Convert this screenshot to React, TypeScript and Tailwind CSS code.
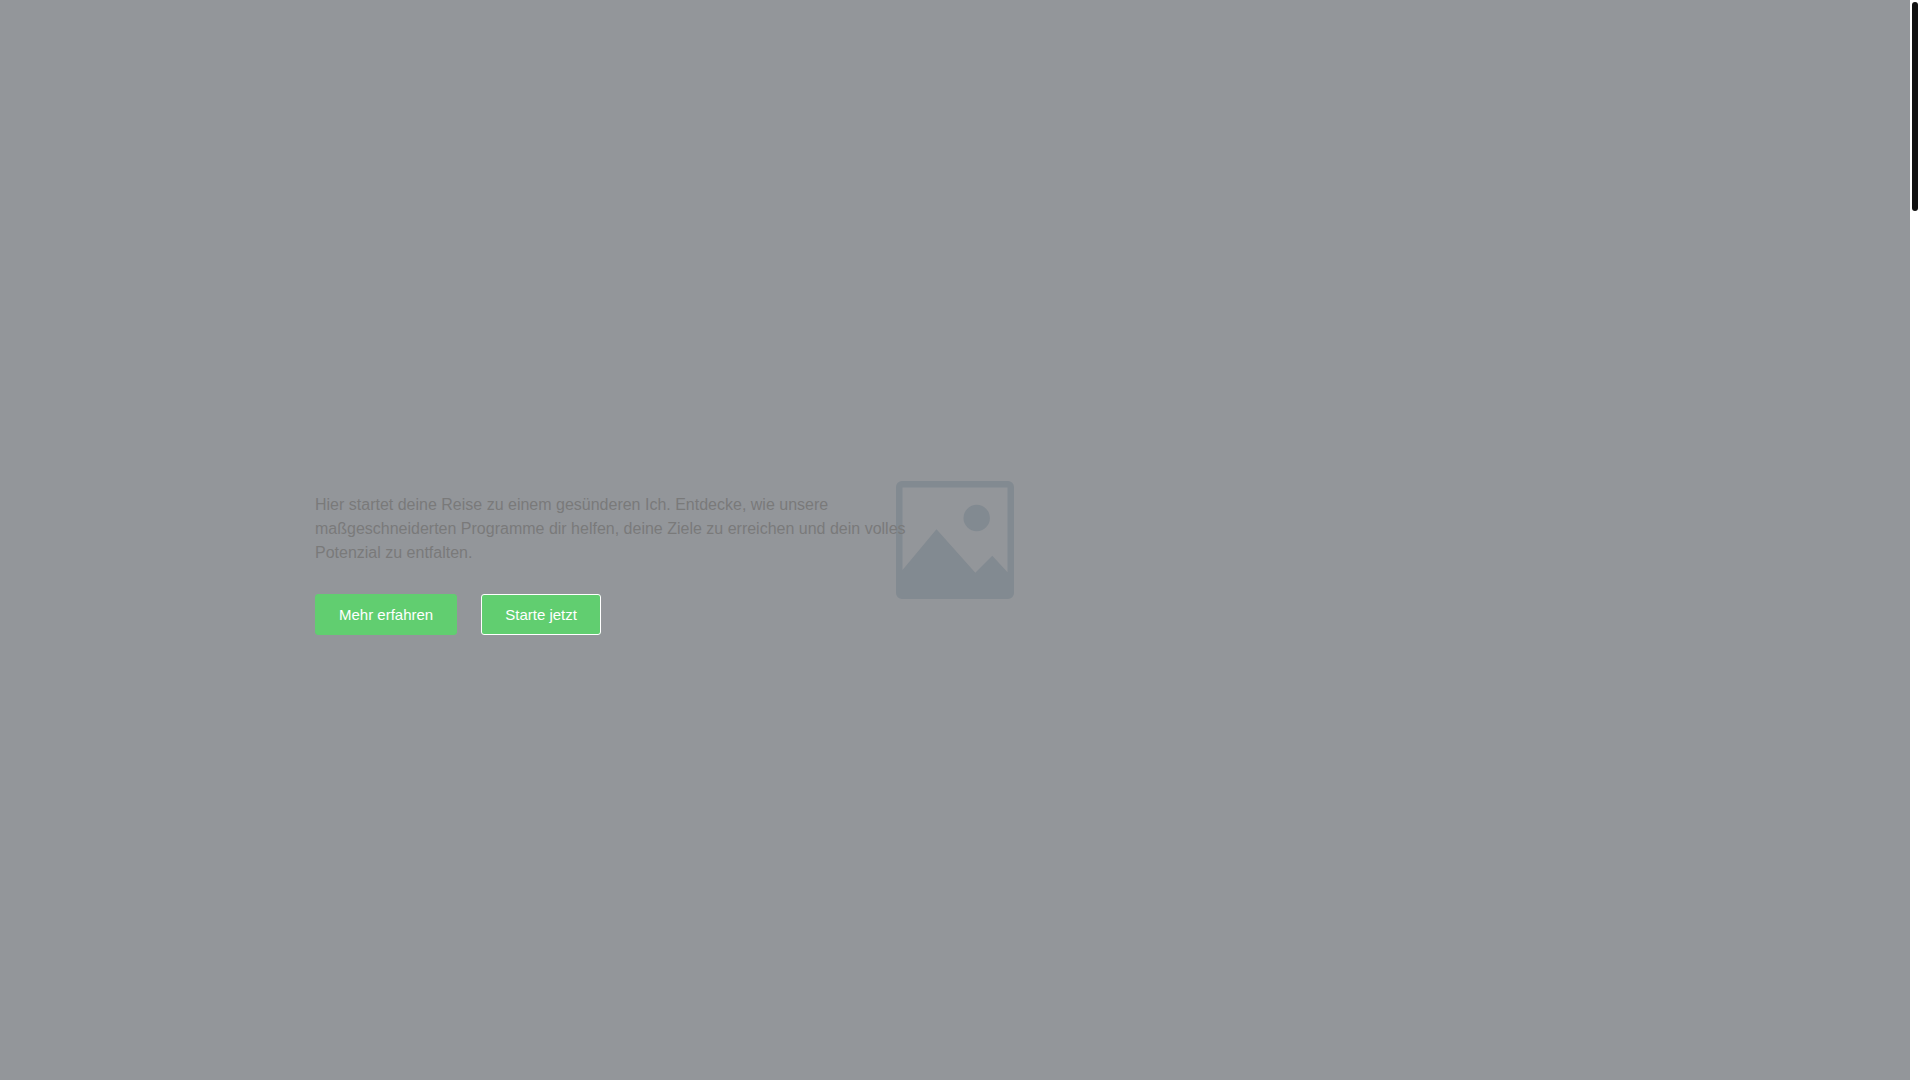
interface IAction {
  label: string;
  href: string;
  outlined?: boolean;
}

const ACTIONS: IAction[] = [
  { label: "Mehr erfahren", href: "#mehr" },
  { label: "Starte jetzt", href: "#start", outlined: true },
];

export default function App() {
  return (
    <div className="flex min-h-screen bg-white font-['Liberation_Sans',Arial,sans-serif]">
      <Hero />
      <ScrollTrack />
    </div>
  );
}

function Hero() {
  return (
    <main className="relative flex flex-1 items-center justify-center bg-[#93969a]">
      {/* placeholder background, the text runs over it */}
      <div className="absolute inset-0 flex items-center justify-center">
        <PlaceholderImage />
      </div>
      <section className="relative w-full max-w-7xl pt-12">
        <div className="w-1/2 pr-5">
          <p className="text-base text-[#7a7a7a]">
            Hier startet deine Reise zu einem gesünderen Ich. Entdecke, wie unsere
            maßgeschneiderten Programme dir helfen, deine Ziele zu erreichen und dein
            volles Potenzial zu entfalten.
          </p>
          <div className="mt-[29px] flex gap-6">
            {ACTIONS.map((action) => (
              <ActionLink key={action.label} action={action} />
            ))}
          </div>
        </div>
      </section>
    </main>
  );
}

function ActionLink({ action }: { action: IAction }) {
  return (
    <a
      href={action.href}
      className={`rounded-[3px] border bg-[#61ce70] px-[23px] py-3 text-[15px] leading-[15px] text-white ${
        action.outlined ? "border-white" : "border-[#61ce70]"
      }`}
    >
      {action.label}
    </a>
  );
}

function PlaceholderImage() {
  return (
    <svg width="118" height="118" viewBox="0 0 118 118" aria-hidden="true">
      <path
        fill="#828a91"
        fillRule="evenodd"
        d="M6 0H112A6 6 0 0 1 118 6V112A6 6 0 0 1 112 118H6A6 6 0 0 1 0 112V6A6 6 0 0 1 6 0ZM6.5 6.5V89L40.5 48.3L79.3 91.7L96.3 74.7L111.5 91.2V6.5Z"
      />
      <circle cx="80.7" cy="37" r="13.2" fill="#828a91" />
    </svg>
  );
}

function ScrollTrack() {
  return (
    <div className="w-2.5 bg-white p-0.5">
      <div className="h-[209px] rounded-full bg-[#111]" />
    </div>
  );
}
